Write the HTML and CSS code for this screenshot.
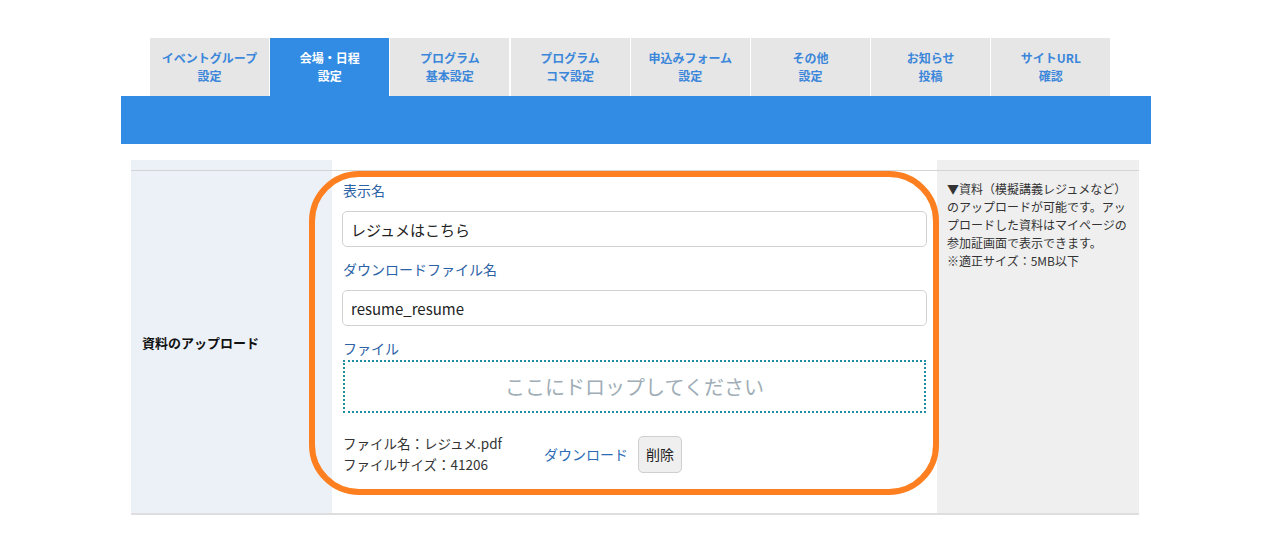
FILE: index.html
```html
<!DOCTYPE html>
<html lang="ja">
<head>
  <meta charset="UTF-8">
  <title>会場・日程設定</title>
  <link rel="stylesheet" href="styles.css">
</head>
<body>
  <!-- タブ -->
  <div class="tabs">
    <div class="tab">イベントグループ<br>設定</div>
    <div class="tab active">会場・日程<br>設定</div>
    <div class="tab">プログラム<br>基本設定</div>
    <div class="tab">プログラム<br>コマ設定</div>
    <div class="tab">申込みフォーム<br>設定</div>
    <div class="tab">その他<br>設定</div>
    <div class="tab">お知らせ<br>投稿</div>
    <div class="tab">サイトURL<br>確認</div>
  </div>
  <div class="bar"></div>

  <!-- 設定テーブル -->
  <div class="table">
    <div class="stub stub-head"></div>
    <div class="stub"></div>
    <div class="stub stub-note"></div>

    <div class="cell head">資料のアップロード</div>
    <div class="cell body">
      <div class="field-label">表示名</div>
      <input class="text-input" type="text" value="レジュメはこちら">
      <div class="field-label">ダウンロードファイル名</div>
      <input class="text-input" type="text" value="resume_resume">
      <div class="field-label file-label">ファイル</div>
      <div class="dropzone">ここにドロップしてください</div>
      <div class="file-info">
        <div class="file-meta">
          <div>ファイル名：レジュメ.pdf</div>
          <div>ファイルサイズ：41206</div>
        </div>
        <a class="download" href="#">ダウンロード</a>
        <button class="delete">削除</button>
      </div>
    </div>
    <div class="cell note">▼資料（模擬講義レジュメなど）のアップロードが可能です。アップロードした資料はマイページの参加証画面で表示できます。<br>※適正サイズ：5MB以下</div>

    <!-- 注目枠 -->
    <div class="highlight"></div>
  </div>
</body>
</html>
```

FILE: styles.css
```css
body {
  margin: 0;
  background: #fff;
  font-family: "Noto Sans CJK JP", "Noto Sans", sans-serif;
  color: #333;
}

.tabs {
  display: flex;
  gap: 1.2px;
  margin-left: 150px;
  padding-top: 38px;
}

.tab {
  width: 119px;
  height: 58px;
  background-color: #e6e6e6;
  color: #3b86da;
  font-size: 12px;
  font-weight: bold;
  line-height: 18px;
  text-align: center;
  display: flex;
  align-items: center;
  justify-content: center;
}

.tab.active {
  background-color: #338ce4;
  color: #fff;
}

.bar {
  width: 1030px;
  height: 48px;
  margin-left: 121px;
  background-color: #338ce4;
}

.table {
  position: relative;
  width: 1008px;
  margin: 16px 0 0 131px;
  display: grid;
  grid-template-columns: 201px 605px 202px;
  border-bottom: 2px solid #dedede;
}

.stub {
  height: 10px;
  border-bottom: 1px solid #d4d4d4;
}

.stub-head {
  background-color: #ecf1f8;
}

.stub-note {
  background-color: #efefef;
}

.cell.head {
  background-color: #ecf1f8;
  font-size: 13px;
  font-weight: bold;
  color: #111;
  padding-left: 11px;
  display: flex;
  align-items: center;
}

.cell.body {
  padding: 9px 10px 38px 11px;
}

.cell.note {
  background-color: #efefef;
  font-size: 12px;
  line-height: 18px;
  color: #333;
  padding: 9px 10px 0 10px;
}

.field-label {
  font-size: 14px;
  line-height: 20px;
  color: #2b62a6;
  margin-bottom: 11px;
}

.text-input {
  display: block;
  box-sizing: border-box;
  width: 585px;
  height: 36px;
  margin: 0 0 12px -1px;
  padding: 0 8px;
  border: 1px solid #d2d2d2;
  border-radius: 5px;
  font-family: inherit;
  font-size: 15px;
  color: #222;
}

.file-label {
  margin-bottom: 2px;
}

.dropzone {
  box-sizing: border-box;
  width: 583px;
  height: 53px;
  border: 2px dotted #1d8ea3;
  display: flex;
  align-items: center;
  justify-content: center;
  font-size: 20px;
  color: #9eadb6;
}

.file-info {
  display: flex;
  align-items: center;
  margin-top: 20px;
}

.file-meta {
  width: 201px;
  font-size: 13.5px;
  line-height: 21px;
  color: #333;
}

.download {
  font-size: 14px;
  color: #2b6cb5;
  text-decoration: none;
  margin-right: 10px;
}

.delete {
  width: 44px;
  height: 37px;
  padding: 0;
  background-color: #efefef;
  border: 1px solid #cfcfcf;
  border-radius: 5px;
  font-family: inherit;
  font-size: 14px;
  color: #222;
}

.highlight {
  position: absolute;
  left: 178px;
  top: 11px;
  width: 630px;
  height: 324px;
  box-sizing: border-box;
  border: 6px solid #fd7f1f;
  border-radius: 50px;
  pointer-events: none;
}
```
